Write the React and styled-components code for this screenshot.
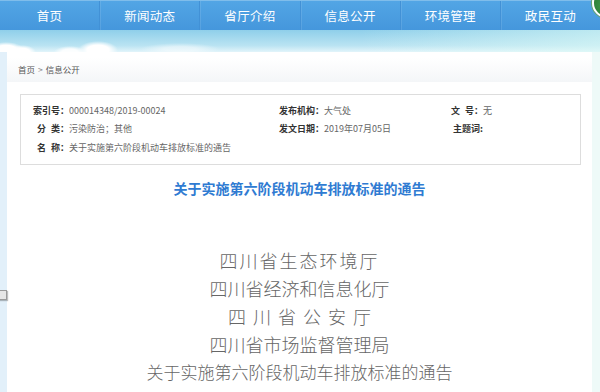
import React from "react";
import styled, { createGlobalStyle } from "styled-components";

const GlobalStyle = createGlobalStyle`
  html, body {
    margin: 0;
    padding: 0;
    overflow: hidden;
  }
  body {
    font-family: "Noto Sans CJK SC", "Noto Sans", sans-serif;
    background: linear-gradient(90deg, #e2f0fa 0, #e2f0fa 7px, #ffffff 7px, #ffffff 592px, #eefaf8 592px);
  }
`;

const Page = styled.div`
  position: relative;
  width: 600px;
  height: 392px;
  overflow: hidden;
`;

const NavBar = styled.div`
  display: flex;
  height: 30px;
  box-sizing: border-box;
  border-top: 1px solid #7fbdeb;
  background: linear-gradient(#52a5e5, #4597dc);
`;

const NavItem = styled.div`
  width: 100px;
  display: flex;
  align-items: center;
  justify-content: center;
  color: #ffffff;
  font-size: 12.5px;
  letter-spacing: 0.3px;
  border-left: ${(p) => (p.$first ? "none" : "1px solid #4291d6")};
  box-shadow: ${(p) => (p.$first ? "none" : "inset 1px 0 0 rgba(255,255,255,0.1)")};
`;

const Badge = styled.div`
  position: absolute;
  top: -12px;
  left: 592px;
  width: 26px;
  height: 26px;
  border-radius: 50%;
  background: radial-gradient(circle at 40% 60%, #3f9a4a, #1f6a2a);
  border: 2px solid #ffffff;
  box-shadow: 0 0 0 1px #6aa56f;
`;

const Banner = styled.div`
  height: 22px;
  background:
    radial-gradient(ellipse 18px 8px at 6px 20px, #ffffff 60%, rgba(255,255,255,0) 100%),
    radial-gradient(ellipse 14px 7px at 22px 22px, #ffffff 55%, rgba(255,255,255,0) 100%),
    radial-gradient(ellipse 20px 9px at 98px 20px, #ffffff 55%, rgba(255,255,255,0) 100%),
    radial-gradient(ellipse 16px 6px at 70px 22px, rgba(255,255,255,0.9) 50%, rgba(255,255,255,0) 100%),
    radial-gradient(ellipse 40px 6px at 180px 19px, rgba(255,255,255,0.5) 40%, rgba(255,255,255,0) 100%),
    linear-gradient(90deg, rgba(255,255,255,0) 60%, rgba(220,250,245,0.6) 100%),
    linear-gradient(#8fcfea, #b9e3f2 70%, #e2f4fa);
`;

const Main = styled.div`
  margin: 0 8px 0 7px;
  background: #ffffff;
  height: 340px;
`;

const Breadcrumb = styled.div`
  height: 30px;
  box-sizing: border-box;
  padding: 11px 0 0 11px;
  font-size: 8.5px;
  color: #555555;
  background: linear-gradient(#ffffff 20%, #f4f6f8);
`;

const Sep = styled.span`
  margin: 0 3px;
  color: #888888;
`;

const InfoBox = styled.div`
  margin: 12px 11px 0 13px;
  border: 1px solid #dddddd;
  padding: 6px 0 7px;
  display: grid;
  grid-template-columns: 48px 203px 52px 107px 52px 1fr;
  grid-auto-rows: 18.5px;
  font-size: 9px;
  align-items: center;
`;

const Label = styled.div`
  text-align: right;
  font-weight: bold;
  color: #333333;
  white-space: pre;
  word-spacing: 3px;
`;

const Value = styled.div`
  color: #666666;
  white-space: nowrap;
  grid-column: ${(p) => p.$span || "auto"};
`;

const Title = styled.h1`
  margin: 13px 0 0;
  text-align: center;
  font-size: 14px;
  line-height: 20px;
  font-weight: bold;
  color: #2f7bd2;
`;

const Body = styled.div`
  margin-top: 48px;
  display: flex;
  flex-direction: column;
  align-items: center;
  color: #666666;
  font-weight: 300;
`;

const Line = styled.div`
  font-size: ${(p) => p.$size || 18}px;
  line-height: 28px;
  letter-spacing: ${(p) => p.$spacing || 0}px;
  word-spacing: ${(p) => p.$word || 0}px;
  white-space: pre;
`;

const SideTab = styled.div`
  position: absolute;
  left: -3px;
  top: 290px;
  width: 8px;
  height: 8px;
  border: 1px solid #9a9a9a;
  background: #e6e6e6;
  box-shadow: 1px 1px 1px rgba(0,0,0,0.25);
`;

const navs = ["首页", "新闻动态", "省厅介绍", "信息公开", "环境管理", "政民互动"];

export default function App() {
  return (
    <Page>
      <GlobalStyle />
      <NavBar>
        {navs.map((n, i) => (
          <NavItem key={n} $first={i === 0}>{n}</NavItem>
        ))}
      </NavBar>
      <Badge />
      <Banner />
      <Main>
        <Breadcrumb>
          首页<Sep>&gt;</Sep>信息公开
        </Breadcrumb>
        <InfoBox>
          <Label>索引号：</Label>
          <Value>000014348/2019-00024</Value>
          <Label>发布机构：</Label>
          <Value>大气处</Value>
          <Label>文 号：</Label>
          <Value>无</Value>

          <Label>分 类：</Label>
          <Value>污染防治；其他</Value>
          <Label>发文日期：</Label>
          <Value>2019年07月05日</Value>
          <Label>主题词:</Label>
          <Value></Value>

          <Label>名 称：</Label>
          <Value $span="2 / -1">关于实施第六阶段机动车排放标准的通告</Value>
        </InfoBox>
        <Title>关于实施第六阶段机动车排放标准的通告</Title>
        <Body>
          <Line $spacing={2}>四川省生态环境厅</Line>
          <Line>四川省经济和信息化厅</Line>
          <Line $word={3}>四 川 省 公 安 厅</Line>
          <Line>四川省市场监督管理局</Line>
          <Line $size={17}>关于实施第六阶段机动车排放标准的通告</Line>
        </Body>
      </Main>
      <SideTab />
    </Page>
  );
}
